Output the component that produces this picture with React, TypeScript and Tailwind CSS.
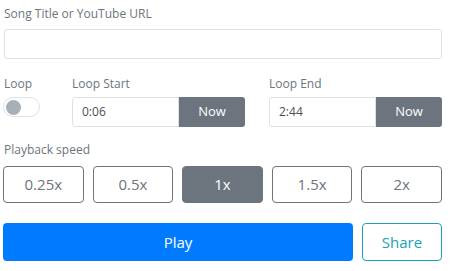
import { useState } from 'react';

const speeds = ['0.25x', '0.5x', '1x', '1.5x', '2x'];

function TimeField({ label, value, className }: { label: string; value: string; className: string }) {
	return (
		<div className={className}>
			<div className="mb-[5px] text-[12px] leading-[17px] text-[#6c757d]">{label}</div>
			<div className="flex h-[30px]">
				<input
					className="w-[107px] rounded-l-[3px] border border-[#dee2e6] px-[9px] text-[12px] text-[#495057] outline-none"
					defaultValue={value}
				/>
				<button className="flex-1 rounded-r-[3px] bg-[#6c757d] text-[13px] text-white">Now</button>
			</div>
		</div>
	);
}

export default function App() {
	const [speed, setSpeed] = useState('1x');
	const [loop, setLoop] = useState(false);

	return (
		<div className="w-[450px] bg-white pt-[5px] pl-[3px] font-['Open_Sans',sans-serif]">
			<div className="w-[439px]">
				<div className="pl-[1px] text-[12px] leading-[17px] text-[#6c757d]">Song Title or YouTube URL</div>
				<input className="mt-[7px] ml-[1px] h-[30px] w-[438px] rounded-[3px] border border-[#dee2e6] px-[9px] text-[12px] outline-none" />

				<div className="mt-[16px] flex">
					<div className="w-[69px]">
						<div className="mb-[5px] pl-[1px] text-[12px] leading-[17px] text-[#6c757d]">Loop</div>
						<button
							onClick={() => setLoop(!loop)}
							className="flex h-[20px] w-[37px] items-center rounded-full border border-[#dee2e6] bg-white px-[2px]"
						>
							<span className="h-[15px] w-[15px] rounded-full bg-[#a7b0b9]" />
						</button>
					</div>
					<TimeField label="Loop Start" value="0:06" className="w-[173px]" />
					<TimeField label="Loop End" value="2:44" className="ml-[24px] w-[173px]" />
				</div>

				<div className="mt-[14px] pl-[1px] text-[12px] leading-[17px] text-[#6c757d]">Playback speed</div>
				<div className="mt-[8px] grid grid-cols-5 gap-[9px]">
					{speeds.map((s) => (
						<button
							key={s}
							onClick={() => setSpeed(s)}
							className={
								s === speed
									? 'h-[37px] rounded-[4px] border border-[#6c757d] bg-[#6c757d] text-[15px] text-white'
									: 'h-[37px] rounded-[4px] border border-[#6c757d] bg-white text-[15px] text-[#6c757d]'
							}
						>
							{s}
						</button>
					))}
				</div>

				<div className="mt-[20px] flex gap-[9px]">
					<button className="h-[38px] w-[350px] rounded-[4px] bg-[#007bff] text-[15px] text-white">Play</button>
					<button className="h-[38px] flex-1 rounded-[4px] border border-[#17a2b8] bg-white text-[15px] text-[#17a2b8]">Share</button>
				</div>
			</div>
		</div>
	);
}
